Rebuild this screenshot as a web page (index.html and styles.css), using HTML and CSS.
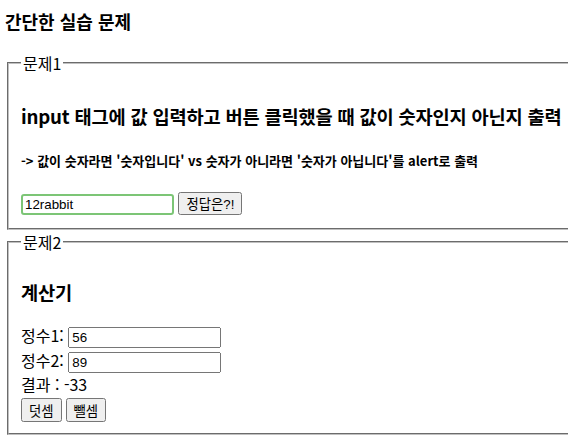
FILE: index.html
```html
<!DOCTYPE html>
<html lang="ko">
<head>
    <meta charset="UTF-8">
    <meta name="viewport" content="width=device-width, initial-scale=1.0">
    <title>간단한 실습 문제</title>
    <link rel="stylesheet" href="styles.css">
</head>
<body>
    <h3 class="title">간단한 실습 문제</h3>
    <fieldset class="quiz">
        <legend>문제1</legend>
        <h3 class="quiz-head">input 태그에 값 입력하고 버튼 클릭했을 때 값이 숫자인지 아닌지 출력</h3>
        <p class="quiz-desc">-&gt; 값이 숫자라면 '숫자입니다' vs 숫자가 아니라면 '숫자가 아닙니다'를 alert로 출력</p>
        <div class="row">
            <input type="text" class="answer" id="num" value="12rabbit">
            <button id="check">정답은?!</button>
        </div>
    </fieldset>
    <fieldset class="quiz">
        <legend>문제2</legend>
        <h3 class="quiz-head calc-title">계산기</h3>
        <div class="calc">
            <label>정수1: <input type="text" id="n1" value="56"></label>
            <label>정수2: <input type="text" id="n2" value="89"></label>
            <div class="result">결과 : <span id="result">-33</span></div>
            <div class="btns">
                <button id="plus">덧셈</button>
                <button id="minus">뺄셈</button>
            </div>
        </div>
    </fieldset>
    <script>
        (function(d){
            d.getElementById('check').addEventListener('click', ()=>{
                let v = d.getElementById('num').value;
                if(v !== '' && !isNaN(v)) {
                    alert('숫자입니다');
                }else{
                    alert('숫자가 아닙니다');
                }
            })
            let calc = (sign)=>{
                let a = Number(d.getElementById('n1').value);
                let b = Number(d.getElementById('n2').value);
                d.getElementById('result').innerHTML = sign > 0 ? a + b : a - b;
            }
            d.getElementById('plus').addEventListener('click', ()=>calc(1));
            d.getElementById('minus').addEventListener('click', ()=>calc(-1));
        })(document)
    </script>
</body>
</html>
```

FILE: styles.css
```css
html,body{
    overflow: hidden;
}
body{
    margin: 0 0 0 5px;
    font-family: "Noto Sans CJK KR", "Noto Sans", sans-serif;
    font-size: 16px;
    color: #000;
    background: #fff;
    width: 700px;
}
.title{
    margin: 8px 0 19px;
    font-size: 18px;
    line-height: 26px;
}
.quiz{
    margin: 0 2px 2px;
    padding: 0 12px 9px;
    border: 2px groove #c0c0c0;
}
.quiz legend{
    padding: 0 2px;
    line-height: 20px;
}
.quiz-head{
    margin: 30px 0 0;
    font-size: 18.7px;
    letter-spacing: -0.2px;
    line-height: 26px;
}
.calc-title{
    margin-top: 27px;
}
.quiz-desc{
    margin: 22px 0 19px;
    font-size: 13px;
    font-weight: bold;
    line-height: 20px;
}
input,button{
    font-family: "Liberation Sans", "Noto Sans CJK KR", sans-serif;
    font-size: 13.33px;
}
input{
    box-sizing: border-box;
    width: 153px;
    height: 21px;
}
button{
    height: 23px;
    padding: 0 6px;
}
.answer{
    border: 2px solid #7cc576;
    border-radius: 3px;
    outline: none;
}
.row{
    margin-bottom: 4px;
}
.calc{
    margin-top: 18px;
    padding-bottom: 2px;
}
.calc label{
    display: block;
    line-height: 25px;
}
.result{
    line-height: 22px;
}
.btns{
    display: flex;
    gap: 4px;
    margin-top: 3px;
}
.btns button{
    height: 24px;
}
```
